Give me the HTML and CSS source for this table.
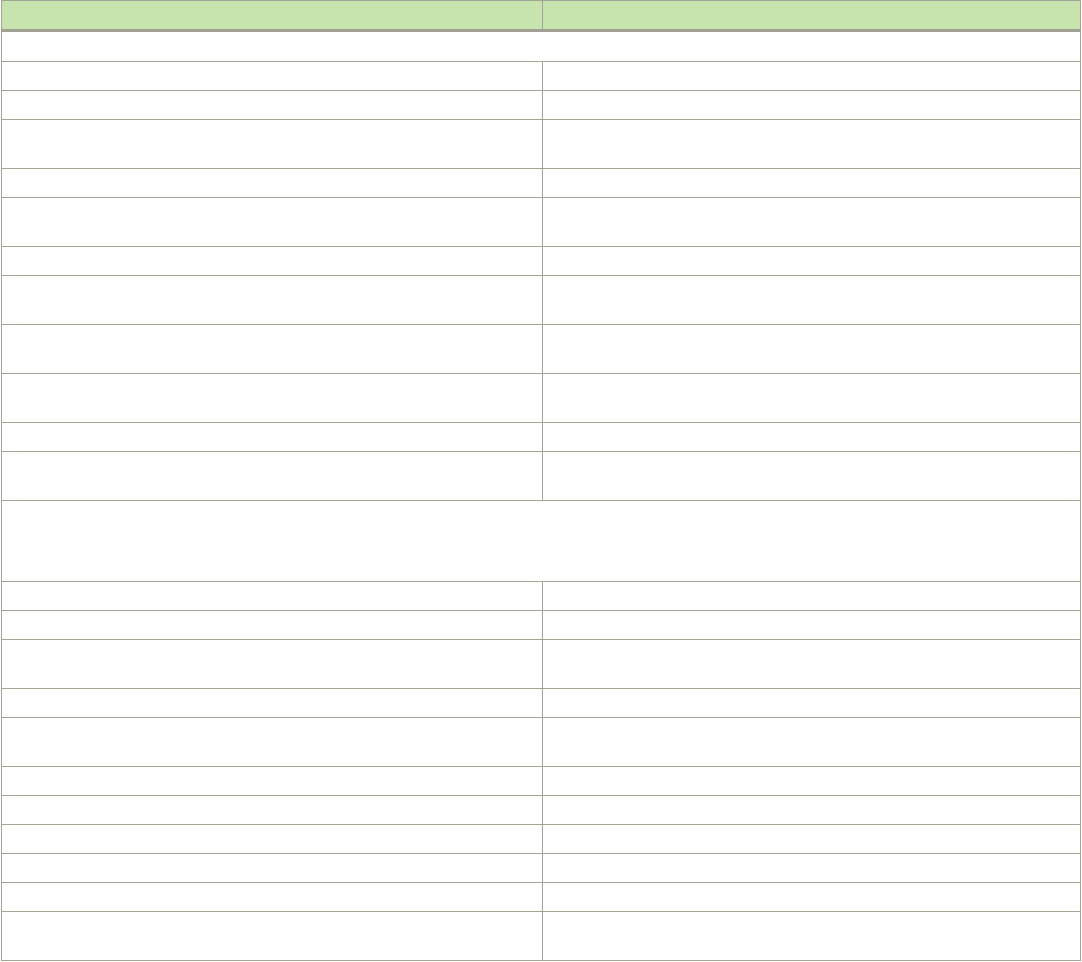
FILE: index.html
```html
<!DOCTYPE html>
<html lang="en">
<head>
    <meta charset="UTF-8">
    <meta name="viewport" content="width=device-width, initial-scale=1.0">
    <title>Table</title>
    <link rel="stylesheet" href="styles.css">
</head>
<body>
    <table class="grid">
        <thead>
            <tr>
                <th></th>
                <th></th>
            </tr>
        </thead>
        <tbody>
            <tr class="first"><td colspan="2"></td></tr>
            <tr class="single"><td></td><td></td></tr>
            <tr class="single"><td></td><td></td></tr>
            <tr class="double"><td></td><td></td></tr>
            <tr class="single"><td></td><td></td></tr>
            <tr class="double"><td></td><td></td></tr>
            <tr class="single"><td></td><td></td></tr>
            <tr class="double"><td></td><td></td></tr>
            <tr class="double"><td></td><td></td></tr>
            <tr class="double"><td></td><td></td></tr>
            <tr class="single"><td></td><td></td></tr>
            <tr class="double"><td></td><td></td></tr>
            <tr class="section"><td colspan="2"></td></tr>
            <tr class="single"><td></td><td></td></tr>
            <tr class="single"><td></td><td></td></tr>
            <tr class="double"><td></td><td></td></tr>
            <tr class="single"><td></td><td></td></tr>
            <tr class="double"><td></td><td></td></tr>
            <tr class="single"><td></td><td></td></tr>
            <tr class="single"><td></td><td></td></tr>
            <tr class="single"><td></td><td></td></tr>
            <tr class="single"><td></td><td></td></tr>
            <tr class="single"><td></td><td></td></tr>
            <tr class="double"><td></td><td></td></tr>
        </tbody>
    </table>
</body>
</html>
```

FILE: styles.css
```css
body {
    font-family: 'Liberation Sans', Arial, sans-serif;
    font-size: 13px;
    background: #fff;
    margin: 0;
    padding: 0 1px;
}

.grid {
    width: 1080px;
    border-collapse: collapse;
    table-layout: fixed;
}

.grid th,
.grid td {
    padding: 0;
    border: 1px solid #a3a396;
}

.grid th {
    height: 28px;
    background-color: #c7e3ae;
    border-bottom: 3px solid #a0a092;
}

.grid th + th {
    border-left-color: #e6f1dc;
}

.grid th:first-child,
.grid td:first-child {
    width: 540px;
}

.first td {
    height: 29px;
}

.single td {
    height: 28px;
}

.double td {
    height: 48px;
}

.section td {
    height: 80px;
}
```
